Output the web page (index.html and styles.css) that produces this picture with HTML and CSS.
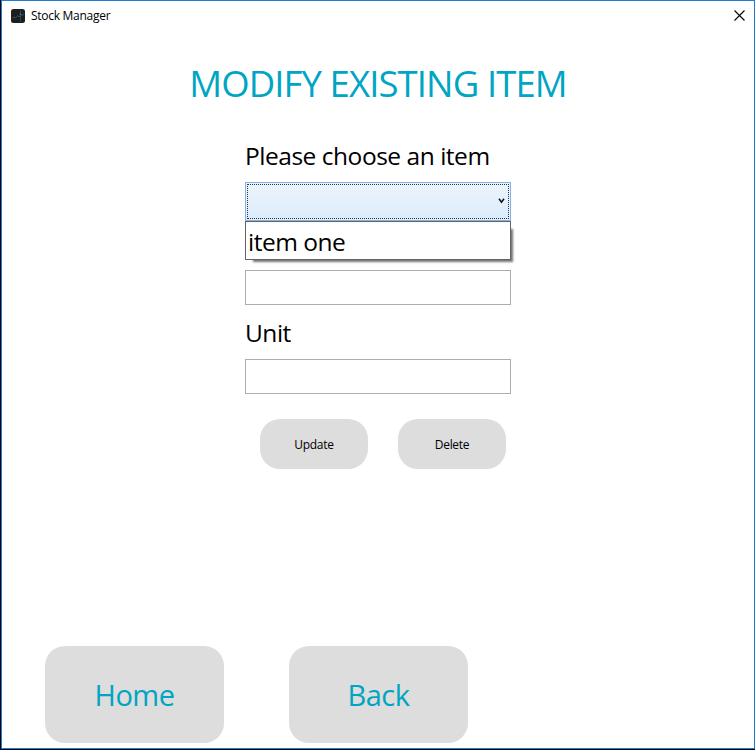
FILE: index.html
```html
<!DOCTYPE html>
<html lang="en">
<head>
<meta charset="utf-8">
<title>Stock Manager</title>
<link rel="stylesheet" href="styles.css">
</head>
<body>
<div class="window">
  <header class="titlebar">
    <svg class="app-icon" width="14" height="14" viewBox="0 0 14 14">
      <rect width="14" height="14" rx="2.5" fill="#1c1e20"/>
      <path d="M1 9.500L3 8l1.500 1L6.500 6.500 8 8l2-2.500 1.500 1L13 4.500" fill="none" stroke="#555" stroke-width=".8"/>
      <path d="M9.500 1v12" stroke="#124f5e" stroke-width="1"/>
      <circle cx="9.500" cy="5" r=".8" fill="#2497b5"/>
    </svg>
    <span class="app-name">Stock Manager</span>
    <svg class="close" width="11" height="11" viewBox="0 0 11 11"><path d="M.5.5l10 10M10.500.5l-10 10" stroke="#000" stroke-width="1.100"/></svg>
  </header>
  <h1 class="heading"><span>MODIFY EXISTING ITEM</span></h1>
  <main class="form">
    <div class="label choose"><span>Please choose an item</span></div>
    <div class="combo">
      <div class="focus">
        <svg width="7" height="6" viewBox="0 0 7 6"><path d="M1 .8l2.500 3.400L6 .8" fill="none" stroke="#111" stroke-width="1.500"/></svg>
      </div>
      <div class="dropdown"><span>item one</span></div>
    </div>
    <input class="field name" type="text" aria-label="Name">
    <div class="label unit"><span>Unit</span></div>
    <input class="field" type="text" aria-label="Unit">
    <div class="actions">
      <button class="small update"><span>Update</span></button>
      <button class="small delete"><span>Delete</span></button>
    </div>
  </main>
  <nav class="nav">
    <button class="large home"><span>Home</span></button>
    <button class="large back"><span>Back</span></button>
  </nav>
</div>
</body>
</html>
```
FILE: styles.css
```css
* { box-sizing: border-box; }
body {
  margin: 0;
  padding: 0 0 1px 1px;
  height: 750px;
  background: #000;
  color: #000;
  font-family: "Open Sans", "Noto Sans", sans-serif;
  overflow: hidden;
}
.window {
  height: 749px;
  border: 1px solid #1a7fd4;
  background: #fff;
  display: flex;
  flex-direction: column;
}
.titlebar {
  height: 29px;
  padding: 0 9px;
  display: flex;
  align-items: center;
}
.app-name { margin-left: 6px; font-size: 12px; letter-spacing: -0.28px; }
.close { margin-left: auto; }
.heading {
  margin: 26px 0 1px;
  height: 54px;
  line-height: 54px;
  text-align: center;
  font-size: 36.500px;
  font-weight: 400;
  letter-spacing: -0.9px;
  color: #00a5c3;
  white-space: nowrap;
}
.form { width: 266px; margin: 27px 0 0 243px; }
.label { height: 36px; line-height: 34px; font-size: 24.500px; letter-spacing: -0.5px; white-space: nowrap; }
.choose { line-height: 36px; letter-spacing: -0.47px; }
.combo {
  position: relative;
  margin-top: 8px;
  height: 39px;
  padding: 1px;
  border: 1px solid #7eb4ea;
  background: linear-gradient(#ebf4fc, #dcecfc);
}
.focus {
  height: 35px;
  border: 1px dotted #333;
  display: flex;
  align-items: center;
  justify-content: flex-end;
  padding: 0 3px 2px 0;
}
.dropdown {
  position: absolute;
  left: -1px;
  top: 38px;
  width: 266px;
  height: 39px;
  padding-left: 2px;
  border: 1px solid #646464;
  background: #fff;
  box-shadow: 5px 5px 2px -3px rgba(0, 0, 0, .55);
  font-size: 24.500px;
  letter-spacing: -0.5px;
  line-height: 39px;
}
.field {
  display: block;
  width: 266px;
  height: 35px;
  border: 1px solid #abadb3;
  background: #fff;
  padding: 0 4px;
  font: inherit;
}
.name { margin-top: 49px; }
.unit { margin: 11px 0 7px; }
.actions { display: flex; gap: 30px; padding: 25px 0 0 15px; }
button { border: 0; padding: 0; background: #ddd; font-family: inherit; }
.small { width: 108px; height: 50px; border-radius: 20px; font-size: 12px; letter-spacing: -0.3px; color: #000; }
.nav { display: flex; gap: 65px; margin: auto 0 5px 43px; }
.large { width: 179px; height: 97px; border-radius: 20px; font-size: 29px; letter-spacing: -0.5px; color: #00a5c3; }
```
